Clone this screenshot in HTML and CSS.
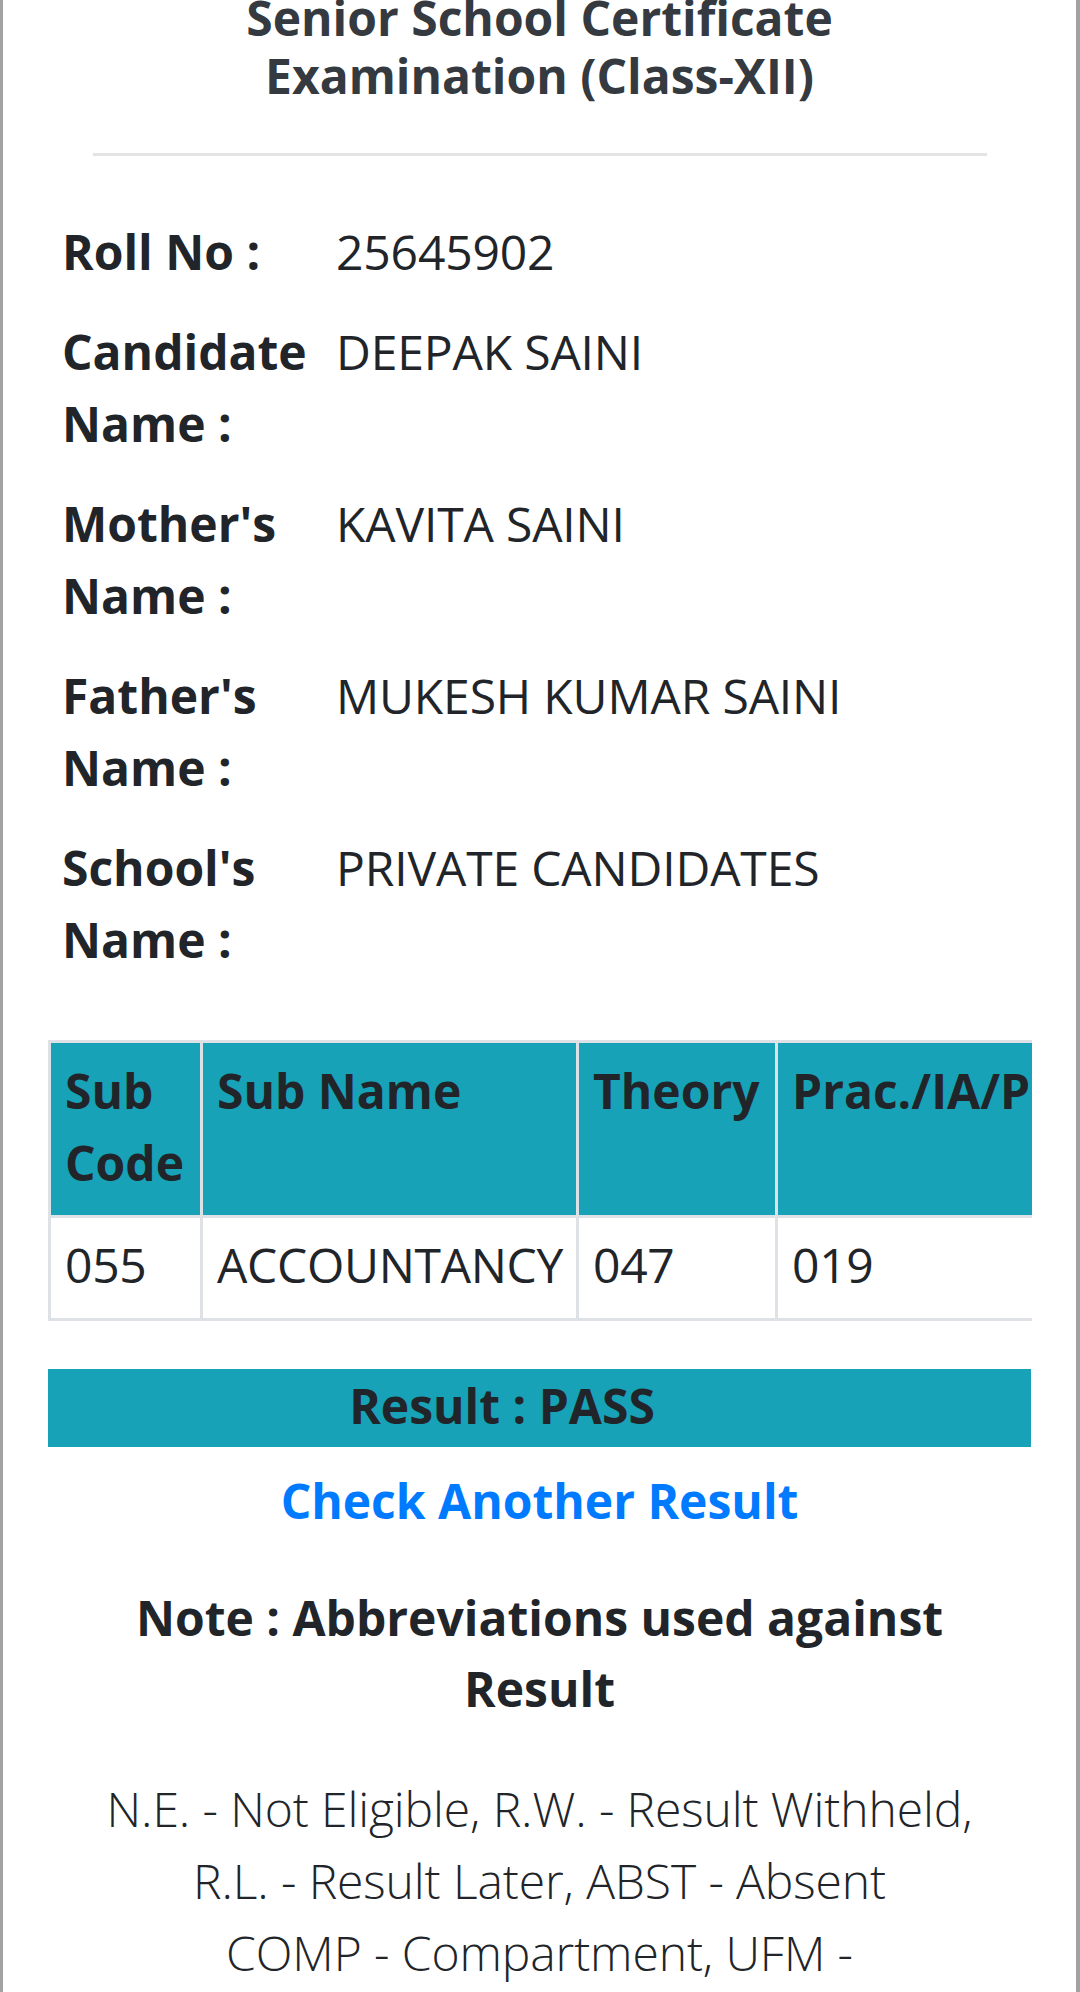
FILE: index.html
```html
<!DOCTYPE html>
<html lang="en">
<head>
<meta charset="utf-8">
<title>Result</title>
<link rel="stylesheet" href="styles.css">
</head>
<body>
<div class="page">
  <h1 class="title">Senior School Certificate<br>Examination (Class-XII)</h1>
  <hr class="rule">
  <div class="info">
    <div class="label">Roll No :</div><div class="value">25645902</div>
    <div class="label">Candidate Name :</div><div class="value">DEEPAK SAINI</div>
    <div class="label">Mother's Name :</div><div class="value">KAVITA SAINI</div>
    <div class="label">Father's Name :</div><div class="value">MUKESH KUMAR SAINI</div>
    <div class="label">School's Name :</div><div class="value">PRIVATE CANDIDATES</div>
  </div>
  <div class="table-wrap">
    <table class="marks">
      <thead>
        <tr>
          <th class="c1">Sub Code</th>
          <th class="c2">Sub Name</th>
          <th class="c3">Theory</th>
          <th class="c4">Prac./IA/Project</th>
          <th class="c5">Marks</th>
        </tr>
      </thead>
      <tbody>
        <tr>
          <td>055</td>
          <td>ACCOUNTANCY</td>
          <td>047</td>
          <td>019</td>
          <td>066</td>
        </tr>
      </tbody>
    </table>
  </div>
  <div class="result">Result : PASS</div>
  <a class="another" href="#">Check Another Result</a>
  <h2 class="note">Note : Abbreviations used against<br>Result</h2>
  <p class="abbr">N.E. - Not Eligible, R.W. - Result Withheld,<br>R.L. - Result Later, ABST - Absent<br>COMP - Compartment, UFM -<br>Unfair Means</p>
</div>
</body>
</html>
```

FILE: styles.css
```css
html, body {
  margin: 0;
  padding: 0;
  background: #ffffff;
}
body {
  font-family: "Open Sans", "Liberation Sans", sans-serif;
  font-size: 48px;
  line-height: 72px;
  color: #212529;
  overflow: hidden;
  height: 1992px;
}
.page {
  border-left: 3px solid #a2a2a2;
  border-right: 4px solid #a2a2a2;
  min-height: 2100px;
  padding: 0 45px;
}
.title {
  margin: -11px 0 0;
  font-size: 48px;
  line-height: 57.6px;
  font-weight: 700;
  text-align: center;
  color: #343a40;
}
.rule {
  margin: 49px 44px 0 45px;
  border: 0;
  border-top: 3px solid #e4e4e4;
  height: 0;
}
.info {
  margin-top: 46px;
  display: grid;
  grid-template-columns: 274px 1fr;
}
.label, .value {
  padding: 14px 0;
}
.label {
  font-weight: 700;
  padding-left: 14px;
  padding-right: 20px;
}
.value {
  padding-left: 14px;
  font-weight: 400;
  letter-spacing: -0.15px;
}
.table-wrap {
  margin-top: 50px;
  overflow: hidden;
  width: 984px;
}
.marks {
  border-collapse: separate;
  border-spacing: 0;
  table-layout: fixed;
  width: 1400px;
  border-left: 3px solid #dee2e6;
  border-top: 3px solid #dee2e6;
}
.marks th, .marks td {
  box-sizing: border-box;
  border-right: 3px solid #dee2e6;
  border-bottom: 3px solid #dee2e6;
  padding: 12px 14px 16px;
  text-align: left;
  vertical-align: top;
}
.marks th {
  background: #17a2b8;
  font-weight: 700;
  color: #212529;
}
.marks td {
  font-weight: 400;
  padding-top: 11px;
  padding-bottom: 17px;
  letter-spacing: -0.3px;
}
.c1 { width: 152px; }
.c2 { width: 376px; }
.c3 { width: 199px; }
.c4 { width: 400px; }
.c5 { width: 270px; }
.result {
  margin-top: 48px;
  background: #17a2b8;
  height: 78px;
  box-sizing: border-box;
  padding: 1px 75px 5px 0;
  text-align: center;
  font-weight: 700;
  color: #212529;
}
.another {
  display: block;
  margin-top: 18px;
  text-align: center;
  font-weight: 700;
  color: #007bff;
  text-decoration: none;
}
.note {
  margin: 45px 0 0;
  font-size: 48px;
  line-height: 71px;
  font-weight: 700;
  text-align: center;
  color: #212529;
}
.abbr {
  margin: 49px 0 0;
  text-align: center;
  font-weight: 300;
  color: #212529;
  line-height: 72px;
  letter-spacing: -0.1px;
}
```
